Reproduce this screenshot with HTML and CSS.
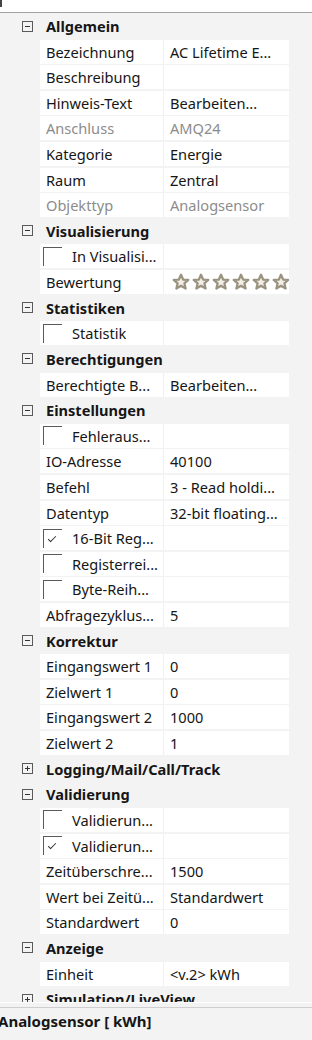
FILE: index.html
```html
<!DOCTYPE html>
<html lang="de">
<head>
    <meta charset="UTF-8">
    <meta name="viewport" content="width=device-width, initial-scale=1.0">
    <title>Eigenschaften</title>
<link rel="stylesheet" href="styles.css">
</head>
<body>
    <div class="topbar"><span class="topmark"></span></div>

    <div class="grid">
        <!-- Allgemein -->
        <div class="cat"><span class="exp minus"></span>Allgemein</div>
        <div class="row"><div class="name">Bezeichnung</div><div class="val">AC Lifetime E...</div></div>
        <div class="row"><div class="name">Beschreibung</div><div class="val"></div></div>
        <div class="row"><div class="name">Hinweis-Text</div><div class="val">Bearbeiten...</div></div>
        <div class="row off"><div class="name">Anschluss</div><div class="val">AMQ24</div></div>
        <div class="row"><div class="name">Kategorie</div><div class="val">Energie</div></div>
        <div class="row"><div class="name">Raum</div><div class="val">Zentral</div></div>
        <div class="row off"><div class="name">Objekttyp</div><div class="val">Analogsensor</div></div>

        <div class="cat"><span class="exp minus"></span>Visualisierung</div>
        <div class="row"><div class="name"><span class="chk"></span>In Visualisi...</div><div class="val"></div></div>
        <div class="row"><div class="name">Bewertung</div>
            <div class="val stars">
                <svg class="star" viewBox="0 0 16 16"><path d="M8 1.5l1.9 4.3 4.6.4-3.5 3 1.1 4.6L8 11.4l-4.1 2.4 1.1-4.6-3.5-3 4.6-.4z"/></svg>
                <svg class="star" viewBox="0 0 16 16"><path d="M8 1.5l1.9 4.3 4.6.4-3.5 3 1.1 4.6L8 11.4l-4.1 2.4 1.1-4.6-3.5-3 4.6-.4z"/></svg>
                <svg class="star" viewBox="0 0 16 16"><path d="M8 1.5l1.9 4.3 4.6.4-3.5 3 1.1 4.6L8 11.4l-4.1 2.4 1.1-4.6-3.5-3 4.6-.4z"/></svg>
                <svg class="star" viewBox="0 0 16 16"><path d="M8 1.5l1.9 4.3 4.6.4-3.5 3 1.1 4.6L8 11.4l-4.1 2.4 1.1-4.6-3.5-3 4.6-.4z"/></svg>
                <svg class="star" viewBox="0 0 16 16"><path d="M8 1.5l1.9 4.3 4.6.4-3.5 3 1.1 4.6L8 11.4l-4.1 2.4 1.1-4.6-3.5-3 4.6-.4z"/></svg>
                <svg class="star" viewBox="0 0 16 16"><path d="M8 1.5l1.9 4.3 4.6.4-3.5 3 1.1 4.6L8 11.4l-4.1 2.4 1.1-4.6-3.5-3 4.6-.4z"/></svg>
            </div>
        </div>

        <div class="cat"><span class="exp minus"></span>Statistiken</div>
        <div class="row"><div class="name"><span class="chk"></span>Statistik</div><div class="val"></div></div>

        <div class="cat"><span class="exp minus"></span>Berechtigungen</div>
        <div class="row"><div class="name">Berechtigte B...</div><div class="val">Bearbeiten...</div></div>

        <div class="cat"><span class="exp minus"></span>Einstellungen</div>
        <div class="row"><div class="name"><span class="chk"></span>Fehleraus...</div><div class="val"></div></div>
        <div class="row"><div class="name">IO-Adresse</div><div class="val">40100</div></div>
        <div class="row"><div class="name">Befehl</div><div class="val">3 - Read holdi...</div></div>
        <div class="row"><div class="name">Datentyp</div><div class="val">32-bit floating...</div></div>
        <div class="row"><div class="name"><span class="chk on"></span>16-Bit Reg...</div><div class="val"></div></div>
        <div class="row"><div class="name"><span class="chk"></span>Registerrei...</div><div class="val"></div></div>
        <div class="row"><div class="name"><span class="chk"></span>Byte-Reih...</div><div class="val"></div></div>
        <div class="row"><div class="name">Abfragezyklus...</div><div class="val">5</div></div>

        <div class="cat"><span class="exp minus"></span>Korrektur</div>
        <div class="row"><div class="name">Eingangswert 1</div><div class="val">0</div></div>
        <div class="row"><div class="name">Zielwert 1</div><div class="val">0</div></div>
        <div class="row"><div class="name">Eingangswert 2</div><div class="val">1000</div></div>
        <div class="row"><div class="name">Zielwert 2</div><div class="val">1</div></div>

        <div class="cat"><span class="exp plus"></span>Logging/Mail/Call/Track</div>

        <div class="cat"><span class="exp minus"></span>Validierung</div>
        <div class="row"><div class="name"><span class="chk"></span>Validierun...</div><div class="val"></div></div>
        <div class="row"><div class="name"><span class="chk on"></span>Validierun...</div><div class="val"></div></div>
        <div class="row"><div class="name">Zeitüberschre...</div><div class="val">1500</div></div>
        <div class="row"><div class="name">Wert bei Zeitü...</div><div class="val">Standardwert</div></div>
        <div class="row"><div class="name">Standardwert</div><div class="val">0</div></div>

        <div class="cat"><span class="exp minus"></span>Anzeige</div>
        <div class="row"><div class="name">Einheit</div><div class="val">&lt;v.2&gt; kWh</div></div>

        <div class="cat"><span class="exp plus"></span>Simulation/LiveView</div>
    </div>

    <div class="status">Analogsensor [ kWh]</div>
</body>
</html>
```

FILE: styles.css
```css
body{
    margin: 0;
    background-color: #f3f3f3;
    font-family: "Noto Sans", "Open Sans", sans-serif;
    font-size: 14.6px;
    color: #161616;
    width: 312px;
    height: 1040px;
    overflow: hidden;
}
.topbar{
    height: 12px;
    background-color: #fff;
    border-bottom: 1px solid #a3a3a3;
    position: relative;
}
.topmark{/*잘린 아이콘 조각*/
    position: absolute;
    left: 0;
    top: 0;
    width: 2px;
    height: 7px;
    background-color: #444;
}
.grid{
    height: 988px;
    padding-top: 1px;
    overflow: hidden;
    border-bottom: 1px solid #fff;
}
.cat{
    height: 24px;
    margin-bottom: 1.62px;
    display: flex;
    align-items: center;
    padding-left: 22px;
    font-weight: bold;
    white-space: nowrap;
}
.exp{
    width: 9px;
    height: 9px;
    border: 1px solid #5a5a5a;
    margin-right: 13px;
    position: relative;
    flex: none;
}
.exp::before{
    content: "";
    position: absolute;
    left: 2px;
    top: 4px;
    width: 5px;
    height: 1px;
    background-color: #333;
}
.exp.plus::after{
    content: "";
    position: absolute;
    left: 4px;
    top: 2px;
    width: 1px;
    height: 5px;
    background-color: #333;
}
.row{
    height: 24px;
    margin-bottom: 1.62px;
    margin-left: 40px;
    width: 249px;
    display: flex;
    background-color: #fff;
}
.name{
    width: 117px;
    padding-left: 6px;
    border-right: 1px solid #f0f0f0;
    display: flex;
    align-items: center;
    white-space: nowrap;
    overflow: hidden;
}
.val{
    flex: 1;
    padding-left: 6px;
    display: flex;
    align-items: center;
    white-space: nowrap;
    overflow: hidden;
}
.off .name, .off .val{
    color: #8c8c8c;
}
.chk{
    width: 18px;
    height: 18px;
    border-top: 1px solid #5a5a5a;
    border-left: 1px solid #5a5a5a;
    margin-left: -3px;
    margin-right: 10px;
    position: relative;
    flex: none;
}
.chk.on::after{/*체크 표시*/
    content: "";
    position: absolute;
    left: 4px;
    top: 6px;
    width: 7px;
    height: 3px;
    border-left: 1.5px solid #333;
    border-bottom: 1.5px solid #333;
    transform: rotate(-45deg);
}
.stars{
    padding-left: 8px;
    gap: 2px;
}
.star{
    width: 18px;
    height: 18px;
    flex: none;
}
.star path{
    fill: #f1eee6;
    stroke: #9a9380;
    stroke-width: 2;
    stroke-linejoin: round;
}
.status{
    margin-top: 4px;
    border-top: 1px solid #cfcfcf;
    height: 26px;
    display: flex;
    align-items: center;
    margin-left: -2px;
    font-weight: bold;
    font-size: 15px;
}
```
